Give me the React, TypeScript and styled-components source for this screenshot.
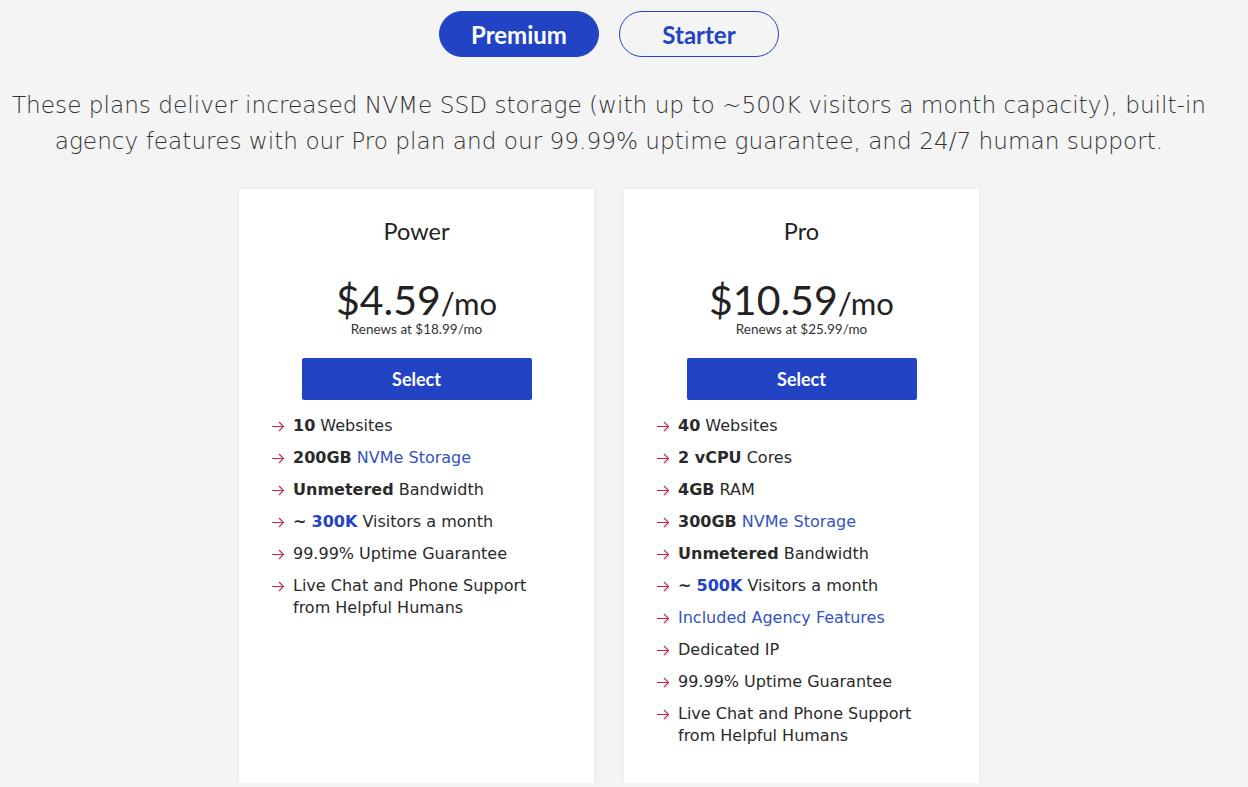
import styled, { createGlobalStyle } from "styled-components";
import { useState } from "react";

const GlobalStyle = createGlobalStyle`
    html, body {
        margin: 0;
        padding: 0;
        background: #f4f4f4;
    }
    body {
        font-family: "Lato", "Noto Sans", sans-serif;
        color: #222;
    }
`;

const blue = "#2143c4";

export const Page = styled.div`
    display: flex;
    flex-direction: column;
    align-items: center;
    padding: 11px 30px 0 0;
`;

export const Toggle = styled.div`
    display: flex;
    gap: 20px;
`;

export const ToggleButton = styled.button<{ $active?: boolean }>`
    width: 160px;
    height: 46px;
    border-radius: 23px;
    border: 1px solid ${blue};
    background: ${(p) => (p.$active ? blue : "transparent")};
    color: ${(p) => (p.$active ? "#fff" : blue)};
    font-family: "Lato", sans-serif;
    font-weight: 700;
    font-size: 24px;
    cursor: pointer;
`;

export const Intro = styled.p`
    margin: 30px 0 0;
    font-family: "DejaVu Sans", sans-serif;
    font-weight: 300;
    font-size: 23.2px;
    line-height: 36px;
    color: #333;
    text-align: center;
    max-width: 1220px;
    white-space: nowrap;
`;

export const Cards = styled.div`
    display: grid;
    grid-template-columns: 355px 355px;
    gap: 30px;
    margin-top: 30px;
`;

export const Card = styled.div`
    background: #fff;
    box-shadow: 0 0 6px rgba(0, 0, 0, 0.06);
    padding: 28px 0 36px;
    display: flex;
    flex-direction: column;
    align-items: center;
`;

export const PlanName = styled.h3`
    margin: 0;
    font-family: "Lato", sans-serif;
    font-weight: 400;
    font-size: 23.5px;
    line-height: 28px;
    color: #222;
`;

export const Price = styled.div`
    margin-top: 36px;
    font-family: "Lato", sans-serif;
    font-size: 41px;
    line-height: 38px;
    color: #222;
    font-weight: 400;

    span {
        font-size: 31px;
    }
`;

export const Renews = styled.div`
    margin-top: 0;
    font-family: "Lato", sans-serif;
    font-size: 13.5px;
    line-height: 14px;
    color: #333;
`;

export const SelectButton = styled.button`
    margin-top: 22px;
    width: 230px;
    height: 42px;
    border: none;
    border-radius: 2px;
    background: ${blue};
    color: #fff;
    font-family: "Lato", sans-serif;
    font-weight: 700;
    font-size: 18px;
    cursor: pointer;
`;

export const Features = styled.ul`
    list-style: none;
    margin: 15px 0 0;
    padding: 0 0 0 32px;
    align-self: stretch;
`;

export const Feature = styled.li`
    display: flex;
    align-items: flex-start;
    gap: 8px;
    font-family: "DejaVu Sans", sans-serif;
    font-size: 16px;
    line-height: 22px;
    color: #2a2a2a;

    & + & {
        margin-top: 10px;
    }

    b {
        font-weight: 700;
    }
`;

export const Arrow = styled.svg`
    flex: none;
    margin-top: 6px;
    width: 14px;
    height: 11px;
`;

export const Link = styled.span<{ $bold?: boolean }>`
    color: ${(p) => (p.$bold ? blue : "#3553bb")};
    font-weight: ${(p) => (p.$bold ? 700 : 400)};
`;

function ArrowIcon() {
    return (
        <Arrow viewBox="0 0 14 11" fill="none" stroke="#c3283d" strokeWidth="1.1">
            <path d="M1 5.5h11.5M8 1l4.5 4.5L8 10" />
        </Arrow>
    );
}

type Plan = {
    name: string;
    price: string;
    renews: string;
    features: React.ReactNode[];
};

const plans: Plan[] = [
    {
        name: "Power",
        price: "$4.59",
        renews: "$18.99",
        features: [
            <><b>10</b> Websites</>,
            <><b>200GB</b> <Link>NVMe Storage</Link></>,
            <><b>Unmetered</b> Bandwidth</>,
            <><b>~</b> <Link $bold>300K</Link> Visitors a month</>,
            <>99.99% Uptime Guarantee</>,
            <>Live Chat and Phone Support<br />from Helpful Humans</>,
        ],
    },
    {
        name: "Pro",
        price: "$10.59",
        renews: "$25.99",
        features: [
            <><b>40</b> Websites</>,
            <><b>2 vCPU</b> Cores</>,
            <><b>4GB</b> RAM</>,
            <><b>300GB</b> <Link>NVMe Storage</Link></>,
            <><b>Unmetered</b> Bandwidth</>,
            <><b>~</b> <Link $bold>500K</Link> Visitors a month</>,
            <><Link>Included Agency Features</Link></>,
            <>Dedicated IP</>,
            <>99.99% Uptime Guarantee</>,
            <>Live Chat and Phone Support<br />from Helpful Humans</>,
        ],
    },
];

export default function App() {
    const [tab, setTab] = useState<"premium" | "starter">("premium");

    return (
        <>
            <GlobalStyle />
            <Page>
                <Toggle>
                    <ToggleButton $active={tab === "premium"} onClick={() => setTab("premium")}>Premium</ToggleButton>
                    <ToggleButton $active={tab === "starter"} onClick={() => setTab("starter")}>Starter</ToggleButton>
                </Toggle>

                <Intro>
                    These plans deliver increased NVMe SSD storage (with up to ~500K visitors a month capacity), built-in
                    <br />
                    agency features with our Pro plan and our 99.99% uptime guarantee, and 24/7 human support.
                </Intro>

                <Cards>
                    {plans.map((plan) => (
                        <Card key={plan.name}>
                            <PlanName>{plan.name}</PlanName>
                            <Price>{plan.price}<span>/mo</span></Price>
                            <Renews>Renews at {plan.renews}/mo</Renews>
                            <SelectButton>Select</SelectButton>
                            <Features>
                                {plan.features.map((f, i) => (
                                    <Feature key={i}>
                                        <ArrowIcon />
                                        <span>{f}</span>
                                    </Feature>
                                ))}
                            </Features>
                        </Card>
                    ))}
                </Cards>
            </Page>
        </>
    );
}
